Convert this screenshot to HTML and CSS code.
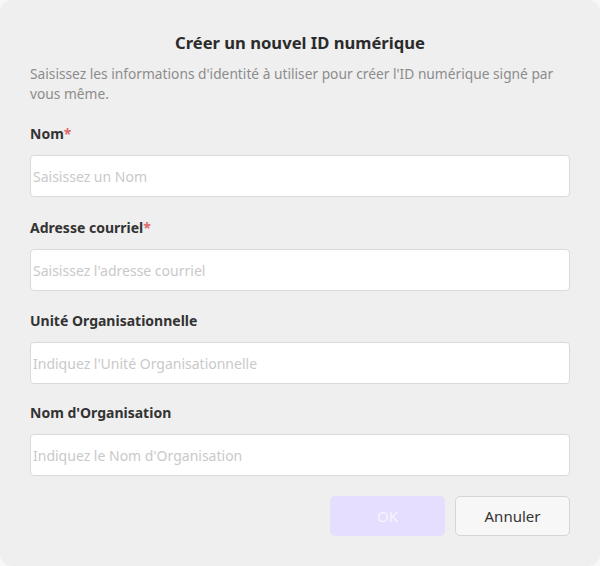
FILE: index.html
```html
<!DOCTYPE html>
<html lang="fr">
<head>
<meta charset="utf-8">
<link rel="stylesheet" href="styles.css">
</head>
<body>
<div class="dialog">
  <h1 class="title">Créer un nouvel ID numérique</h1>
  <p class="desc">Saisissez les informations d'identité à utiliser pour créer l'ID numérique signé par vous même.</p>
  <div class="field field-1">
    <label class="label">Nom<span class="req">*</span></label>
    <div class="input"><span class="ph">Saisissez un Nom</span></div>
  </div>
  <div class="field field-2">
    <label class="label">Adresse courriel<span class="req">*</span></label>
    <div class="input"><span class="ph">Saisissez l'adresse courriel</span></div>
  </div>
  <div class="field field-3">
    <label class="label">Unité Organisationnelle</label>
    <div class="input"><span class="ph">Indiquez l'Unité Organisationnelle</span></div>
  </div>
  <div class="field field-4">
    <label class="label">Nom d'Organisation</label>
    <div class="input"><span class="ph">Indiquez le Nom d'Organisation</span></div>
  </div>
  <div class="actions">
    <button class="btn btn-ok">OK</button>
    <button class="btn btn-cancel">Annuler</button>
  </div>
</div>
</body>
</html>
```

FILE: styles.css
```css
html, body {
  margin: 0;
  padding: 0;
  background: #f8f8f8;
}
body {
  font-family: "Noto Sans", "Open Sans", sans-serif;
  width: 600px;
  height: 566px;
}
.dialog {
  box-sizing: border-box;
  width: 600px;
  height: 566px;
  background: #efefef;
  border-radius: 12px;
  padding: 30px 30px 0 30px;
  display: flex;
  flex-direction: column;
}
.title {
  margin: 0;
  font-size: 16.6px;
  font-weight: 700;
  color: #2b2b2b;
  text-align: center;
  line-height: 26px;
}
.desc {
  margin: 8px 0 0 0;
  font-size: 13.75px;
  line-height: 20px;
  color: #8c8c8c;
}
.field {
  display: flex;
  flex-direction: column;
  gap: 11px;
}
.field-1 { margin-top: 20px; }
.field-2 { margin-top: 21px; }
.field-3 { margin-top: 20px; }
.field-4 { margin-top: 19px; }
.label {
  font-size: 14px;
  font-weight: 700;
  line-height: 20px;
  color: #333333;
}
.req {
  color: #e0686c;
}
.input {
  box-sizing: border-box;
  height: 42px;
  background: #ffffff;
  border: 1px solid #dadada;
  border-radius: 4px;
  display: flex;
  align-items: center;
  padding-left: 2px;
}
.ph {
  font-size: 14px;
  color: #c9c9c9;
}
.actions {
  display: flex;
  justify-content: flex-end;
  gap: 10px;
  margin-top: 20px;
}
.btn {
  box-sizing: border-box;
  width: 115px;
  height: 40px;
  border-radius: 5px;
  font-family: "Noto Sans", "Open Sans", sans-serif;
  font-size: 15px;
  cursor: pointer;
}
.btn-ok {
  background: #e6defe;
  border: none;
  color: #f7f4ff;
}
.btn-cancel {
  background: #f7f7f7;
  border: 1px solid #d6d6d6;
  color: #333333;
}
```
